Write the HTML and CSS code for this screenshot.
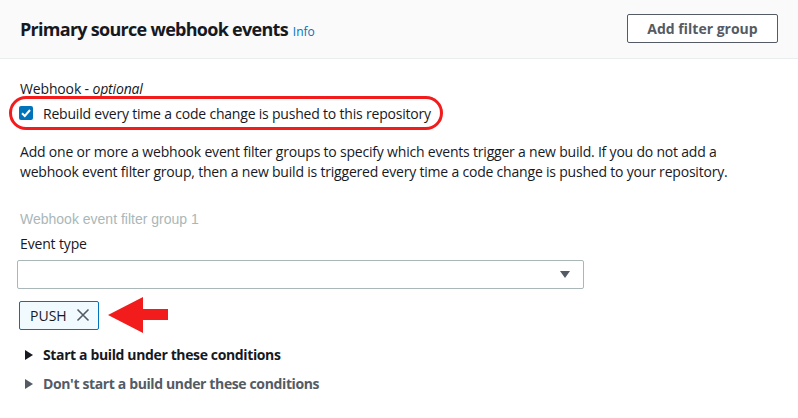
FILE: index.html
```html
<!DOCTYPE html>
<html>
<head>
<meta charset="utf-8">
<link rel="stylesheet" href="styles.css">
</head>
<body>
<div class="header">
  <h2 class="title">Primary source webhook events <a class="info">Info</a></h2>
  <button class="btn">Add filter group</button>
</div>
<div class="content">
  <div class="label">Webhook - <i>optional</i></div>
  <div class="highlight">
    <span class="checkbox"><svg width="14" height="14" viewBox="0 0 14 14"><path d="M3 7.2 L5.8 10 L11 4" fill="none" stroke="#fff" stroke-width="2"/></svg></span>
    <span class="cb-text">Rebuild every time a code change is pushed to this repository</span>
  </div>
  <p class="desc">Add one or more a webhook event filter groups to specify which events trigger a new build. If you do not add a webhook event filter group, then a new build is triggered every time a code change is pushed to your repository.</p>
  <div class="group-title">Webhook event filter group 1</div>
  <div class="label field-label">Event type</div>
  <div class="select"><svg width="10" height="8" viewBox="0 0 10 8"><path d="M0 0 H10 L5 7 Z" fill="#545b64"/></svg></div>
  <div class="token-row">
    <span class="token">PUSH <svg width="14" height="14" viewBox="0 0 14 14"><path d="M1.5 1.5 L12.5 12.5 M12.5 1.5 L1.5 12.5" stroke="#545b64" stroke-width="1.6" fill="none"/></svg></span>
    <svg class="arrow" width="62" height="36" viewBox="0 0 62 36"><path d="M0 18 L35 0 L35 12 L60 12 L60 23 L35 23 L35 36 Z" fill="#f21c1c"/></svg>
  </div>
  <div class="expander"><span class="caret"></span>Start a build under these conditions</div>
  <div class="expander muted"><span class="caret"></span>Don't start a build under these conditions</div>
</div>
</body>
</html>
```
FILE: styles.css
```css
* { box-sizing: border-box; }
body {
  margin: 0;
  font-family: "Open Sans", "Noto Sans", sans-serif;
  font-size: 14px;
  color: #16191f;
  background: #fff;
}
.header {
  height: 59px;
  background: #fafafa;
  border-bottom: 1px solid #eaeded;
  display: flex;
  align-items: center;
  justify-content: space-between;
  padding: 0 20px 0 20px;
}
.title {
  margin: 0;
  font-size: 18px;
  font-weight: 700;
  letter-spacing: -0.72px;
}
.info {
  font-size: 12px;
  font-weight: 400;
  color: #0073bb;
  letter-spacing: 0;
  margin-left: 1px;
}
.btn {
  width: 151px;
  height: 29px;
  background: #fff;
  border: 1px solid #545b64;
  border-radius: 2px;
  font-family: inherit;
  font-size: 14px;
  font-weight: 700;
  color: #545b64;
  margin-top: -1px;
}
.content {
  padding: 20px 20px;
}
.label {
  line-height: 20px;
  letter-spacing: -0.15px;
}
.highlight {
  display: inline-flex;
  align-items: center;
  margin-left: -11px;
  margin-top: -3px;
  height: 34px;
  border: 3px solid #f21c1c;
  border-radius: 17px;
  padding: 0 9px 0 7px;
  letter-spacing: -0.2px;
}
.checkbox {
  width: 14px;
  height: 14px;
  background: #0073bb;
  border-radius: 2px;
  display: flex;
  margin-right: 10px;
}
.desc {
  margin: 12px 0 0;
  line-height: 20px;
  letter-spacing: -0.2px;
}
.group-title {
  margin-top: 27px;
  font-family: "Liberation Sans", Arial, sans-serif;
  color: #aab7b8;
  line-height: 20px;
}
.field-label {
  margin-top: 5px;
}
.select {
  margin-top: 6px;
  margin-left: -3px;
  width: 567px;
  height: 29px;
  border: 1px solid #aab7b8;
  border-radius: 2px;
  display: flex;
  align-items: center;
  justify-content: flex-end;
  padding-right: 13px;
}
.token-row {
  display: flex;
  align-items: center;
  margin-top: 8px;
}
.token {
  display: inline-flex;
  align-items: center;
  gap: 9px;
  height: 29px;
  width: 80px;
  margin-left: -1px;
  padding-left: 10px;
  background: #f1faff;
  border: 1px solid #0073bb;
  border-radius: 2px;
}
.arrow {
  margin-left: 9px;
}
.expander {
  display: flex;
  align-items: center;
  font-weight: 700;
  line-height: 20px;
  margin-top: 12px;
  letter-spacing: -0.37px;
}
.expander.muted {
  color: #545b64;
  margin-top: 9px;
}
.caret {
  width: 0;
  height: 0;
  border-top: 5px solid transparent;
  border-bottom: 5px solid transparent;
  border-left: 8px solid currentColor;
  margin-left: 5px;
  margin-right: 10px;
}
```
